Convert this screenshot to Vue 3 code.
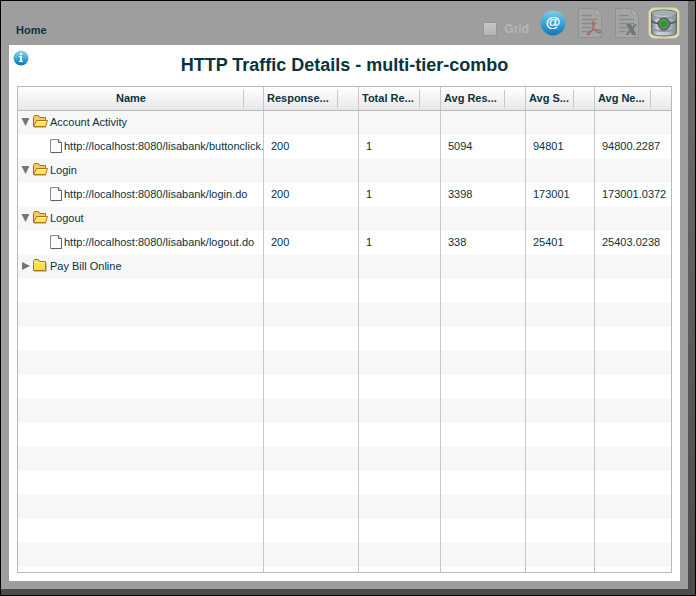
<script setup>
import { ref, computed } from 'vue'

const grid = ref(false)

const columns = [
  { label: 'Name', key: 'name' },
  { label: 'Response...', key: 'response' },
  { label: 'Total Re...', key: 'total' },
  { label: 'Avg Res...', key: 'avgres' },
  { label: 'Avg S...', key: 'avgs' },
  { label: 'Avg Ne...', key: 'avgne' }
]

const groups = ref([
  {
    name: 'Account Activity',
    open: true,
    items: [['http://localhost:8080/lisabank/buttonclick.', '200', '1', '5094', '94801', '94800.2287']]
  },
  {
    name: 'Login',
    open: true,
    items: [['http://localhost:8080/lisabank/login.do', '200', '1', '3398', '173001', '173001.0372']]
  },
  {
    name: 'Logout',
    open: true,
    items: [['http://localhost:8080/lisabank/logout.do', '200', '1', '338', '25401', '25403.0238']]
  },
  { name: 'Pay Bill Online', open: false, items: [] }
])

const rows = computed(() => {
  const out = []
  for (const group of groups.value) {
    out.push({ group })
    if (group.open) group.items.forEach((cells) => out.push({ cells }))
  }
  while (out.length < 19) out.push({})
  return out
})
</script>

<template>
  <div class="window">
    <div class="shell">
      <header class="bar">
        <a class="home" href="#">Home</a>
        <div class="tools">
          <label class="grid-toggle">
            <input v-model="grid" type="checkbox" disabled />
            <span>Grid</span>
          </label>
          <button class="tool mail" type="button" aria-label="E-mail">
            <svg width="26" height="26" viewBox="0 0 26 26">
              <defs>
                <linearGradient id="mailFill" x1="0" y1="0" x2="0" y2="1">
                  <stop offset="0" stop-color="#7fcbe6" />
                  <stop offset="0.5" stop-color="#3fa5d3" />
                  <stop offset="1" stop-color="#0f76b5" />
                </linearGradient>
              </defs>
              <circle cx="13" cy="13" r="12.5" fill="url(#mailFill)" />
              <text x="13" y="17" text-anchor="middle" class="at">@</text>
            </svg>
          </button>
          <button class="tool pdf" type="button" disabled aria-label="Export PDF">
            <svg width="26" height="32" viewBox="0 0 26 32">
              <path d="M1.5 1.5H18L24.5 8V30.5H1.5Z" fill="#a5a5a5" stroke="#919191" />
              <path d="M18 1.5V8H24.5Z" fill="#b2b2b2" stroke="#959595" />
              <path d="M5 8.5H15M5 12.5H20M5 16.5H20M5 20.5H14M5 24.5H11" stroke="#8b8b8b" stroke-width="1.5" />
              <path d="M15.5 15C17.3 14.500 17.5 16.500 16.800 19C16 22 13.5 26.5 11.5 27.5C9.5 28 10 25.5 13 24.3C16 23 20 22.5 22.5 23.5C25 25 22.5 27 19.8 24.8C17.5 23 15.5 18.5 15.2 16Z" fill="none" stroke="#a06c6c" stroke-width="1.3" />
            </svg>
          </button>
          <button class="tool excel" type="button" disabled aria-label="Export spreadsheet">
            <svg width="26" height="32" viewBox="0 0 26 32">
              <path d="M1.5 1.5H18L24.5 8V30.5H1.5Z" fill="#a5a5a5" stroke="#919191" />
              <path d="M18 1.5V8H24.5Z" fill="#b2b2b2" stroke="#959595" />
              <path d="M5 8.5H15M5 12.5H20M5 16.5H20M5 20.5H14M5 24.5H12" stroke="#8b8b8b" stroke-width="1.5" />
              <path d="M12 17H16.5L18.5 20L20.5 17H22.5L19.5 22L22.5 28H18L16.5 24.8L14 28H11.5L15.3 22.5Z" fill="#6d7a6f" />
            </svg>
          </button>
          <button class="tool database" type="button" aria-label="Data source">
            <svg width="32" height="32" viewBox="0 0 32 32">
              <defs>
                <linearGradient id="dbFill" x1="0" y1="0" x2="1" y2="0">
                  <stop offset="0" stop-color="#76838a" />
                  <stop offset="0.25" stop-color="#ced6d9" />
                  <stop offset="0.7" stop-color="#b6bfc4" />
                  <stop offset="1" stop-color="#7b878d" />
                </linearGradient>
              </defs>
              <rect x="1" y="1" width="30" height="30" rx="5" fill="#dedeb0" stroke="#d6d6a8" />
              <path d="M3.5 6C3.5 2 28.5 2 28.5 6V26C28.5 30 3.5 30 3.5 26Z" fill="url(#dbFill)" stroke="#626c72" />
              <path d="M4 6.5C5 9.5 27 9.5 28 6.5C28 2.8 4 2.8 4 6.5Z" fill="#a3adb2" />
              <path d="M4 9C7 11.5 25 11.5 28 9M4 22C7 24.5 25 24.5 28 22" fill="none" stroke="#8b979d" stroke-width="2" />
              <path d="M3.5 14C6 16 9 16.5 11 16.5M21 16.5C23 16.5 26 16 28.5 14" fill="none" stroke="#404a50" stroke-width="1.3" />
              <circle cx="16" cy="17" r="5.5" fill="#b8c8b8" stroke="#555d61" stroke-width="2" />
              <circle cx="16" cy="17" r="4" fill="#289a2d" />
            </svg>
          </button>
        </div>
      </header>

      <main class="panel">
        <div class="heading">
          <button class="info" type="button" aria-label="Information">
            <svg width="16" height="16" viewBox="0 0 16 16">
              <defs>
                <linearGradient id="infoFill" x1="0" y1="0" x2="0" y2="1">
                  <stop offset="0" stop-color="#91d5eb" />
                  <stop offset="0.5" stop-color="#45add8" />
                  <stop offset="1" stop-color="#0873b3" />
                </linearGradient>
              </defs>
              <circle cx="8" cy="8" r="7.5" fill="url(#infoFill)" />
              <path d="M7 3H9V5H7ZM6 6H9V11H10V12H6V11H7V7H6Z" fill="#edf8fc" />
            </svg>
          </button>
          <h1>HTTP Traffic Details - multi-tier-combo</h1>
        </div>

        <div class="frame">
          <table>
            <colgroup>
              <col v-for="c in columns" :key="c.key" :class="'col-' + c.key" />
            </colgroup>
            <thead>
              <tr>
                <th v-for="c in columns" :key="c.key" :class="'head-' + c.key" scope="col">
                  <div class="th">
                    <span class="label">{{ c.label }}</span>
                    <span class="sort"></span>
                  </div>
                </th>
              </tr>
            </thead>
            <tbody>
              <tr v-for="(row, i) in rows" :key="i">
                <template v-if="row.group">
                  <td>
                    <div class="node">
                      <button
                        class="twist"
                        type="button"
                        :aria-expanded="row.group.open"
                        :aria-label="row.group.name"
                        @click="row.group.open = !row.group.open"
                      >
                        <svg width="9" height="9" viewBox="0 0 9 9">
                          <path v-if="row.group.open" d="M0.5 0H8.5L4.5 8Z" fill="#6f7777" />
                          <path v-else d="M1 0L9 4L1 8Z" fill="#6f7777" />
                        </svg>
                      </button>
                      <svg v-if="row.group.open" class="folder" width="16" height="14" viewBox="0 0 16 14">
                        <path d="M0.5 11.5V2.5L1.5 0.5H5.5L6.5 2.5H12.5V5" fill="#f3cf62" stroke="#a87524" />
                        <path d="M0.5 11.500L3.5 5.5H14.5L12.5 11.5Z" fill="#ffe45c" stroke="#a87524" />
                        <path d="M4.500 6.5H13.5" stroke="#fff6b5" />
                        <path d="M1 12.5H13" stroke="#8c8c8c" stroke-opacity="0.5" />
                      </svg>
                      <svg v-else class="folder" width="16" height="14" viewBox="0 0 16 14">
                        <path d="M0.5 11.5V2.5L1.5 0.5H5.5L6.5 2.5H12.5V11.5Z" fill="#ffe03f" stroke="#a87524" />
                        <path d="M1.5 3.5H12" stroke="#fff3a4" />
                        <path d="M13.5 4V12.5H1" fill="none" stroke="#8c8c8c" stroke-opacity="0.5" />
                      </svg>
                      <span>{{ row.group.name }}</span>
                    </div>
                  </td>
                  <td v-for="n in 5" :key="n"></td>
                </template>
                <template v-else-if="row.cells">
                  <td>
                    <div class="node leaf">
                      <svg width="13" height="15" viewBox="0 0 13 15">
                        <path d="M0.5 0.5H8.5L11.5 3.5V13.5H0.5Z" fill="#fbfbfb" stroke="#8b8b8b" />
                        <path d="M8.5 0.5V3.5H11.5" fill="#ddd" stroke="#5c5c5c" />
                        <path d="M11.5 4V13.5H1" fill="none" stroke="#606060" />
                      </svg>
                      <span>{{ row.cells[0] }}</span>
                    </div>
                  </td>
                  <td v-for="n in 5" :key="n" class="value">{{ row.cells[n] }}</td>
                </template>
                <template v-else>
                  <td v-for="n in 6" :key="n"></td>
                </template>
              </tr>
              <tr class="tail">
                <td v-for="n in 6" :key="n"></td>
              </tr>
            </tbody>
          </table>
        </div>
      </main>
    </div>
  </div>
</template>

<style>
body {
  margin: 0;
}
</style>

<style scoped>
* {
  box-sizing: border-box;
}
.window {
  min-height: 100vh;
  display: flex;
  padding: 0 7px 6px 0;
  border: 1px solid #000;
  background: linear-gradient(#707070, #4b4b4b);
  color: #0b333c;
  font-family: 'Liberation Sans', Arial, sans-serif;
  font-size: 11px;
}
.shell {
  flex: 1;
  min-width: 0;
  display: flex;
  flex-direction: column;
  padding: 0 8px 8px;
  background: #9e9e9e;
}
button {
  display: block;
  padding: 0;
  border: 0;
  background: none;
}
svg {
  display: block;
  flex: none;
}
.bar {
  height: 44px;
  display: flex;
  justify-content: space-between;
  align-items: center;
}
.home {
  padding: 14px 0 0 7px;
  color: inherit;
  font-weight: bold;
  text-decoration: none;
}
.tools {
  display: flex;
  align-items: center;
}
.grid-toggle {
  display: flex;
  align-items: center;
  gap: 7px;
  margin-right: 11px;
  padding-top: 12px;
  color: #aeb8b8;
  font-size: 12px;
  font-weight: bold;
}
.grid-toggle input {
  appearance: none;
  width: 14px;
  height: 14px;
  margin: 0;
  border: 1px solid #939696;
  background: linear-gradient(#c6c6c6, #b3b3b3);
}
.at {
  fill: #fff;
  font-family: 'Liberation Sans', Arial, sans-serif;
  font-size: 15px;
  font-weight: bold;
}
.pdf {
  margin-left: 11px;
}
.excel {
  margin-left: 11px;
}
.database {
  margin-left: 8px;
}
.panel {
  flex: 1;
  display: flex;
  flex-direction: column;
  padding: 0 8px 8px;
  background: #fff;
}
.heading {
  height: 41px;
  display: grid;
  grid-template-columns: 16px 1fr 16px;
  align-items: start;
}
.info {
  margin: 5px 0 0 -4px;
}
h1 {
  margin: 0;
  padding-top: 9px;
  font-size: 18px;
  line-height: 22px;
  text-align: center;
}
.frame {
  flex: 1;
  border: 1px solid #b7babc;
}
table {
  width: 100%;
  table-layout: fixed;
  border-collapse: separate;
  border-spacing: 0;
}
.col-response {
  width: 95px;
}
.col-total {
  width: 82px;
}
.col-avgres {
  width: 85px;
}
.col-avgs {
  width: 69px;
}
.col-avgne {
  width: 76px;
}
th,
td {
  height: 24px;
  padding: 0;
  border-right: 1px solid #c5c8ca;
  text-align: left;
  white-space: nowrap;
  overflow: hidden;
}
td {
  padding-bottom: 2px;
}
th:last-child,
td:last-child {
  border-right: 0;
}
th {
  border-bottom: 1px solid #b7babc;
  background: linear-gradient(#fff, #e8e8e8);
}
.th {
  height: 23px;
  display: flex;
  align-items: center;
}
.label {
  flex: 1;
  padding: 0 0 2px 3px;
}
.head-name .label {
  padding-left: 1px;
  text-align: center;
}
.sort {
  width: 21px;
  height: 18px;
  border-left: 1px solid #c5c8ca;
}
.head-name .sort {
  width: 20px;
}
tbody tr:nth-child(odd) td {
  background: #f7f7f7;
}
.value {
  padding-left: 7px;
}
.node {
  display: flex;
  align-items: center;
  padding-left: 3px;
}
.folder {
  margin: 0 1px 0 3px;
}
.leaf {
  gap: 1px;
  padding-left: 32px;
}
.tail td {
  height: 5px;
}
</style>
